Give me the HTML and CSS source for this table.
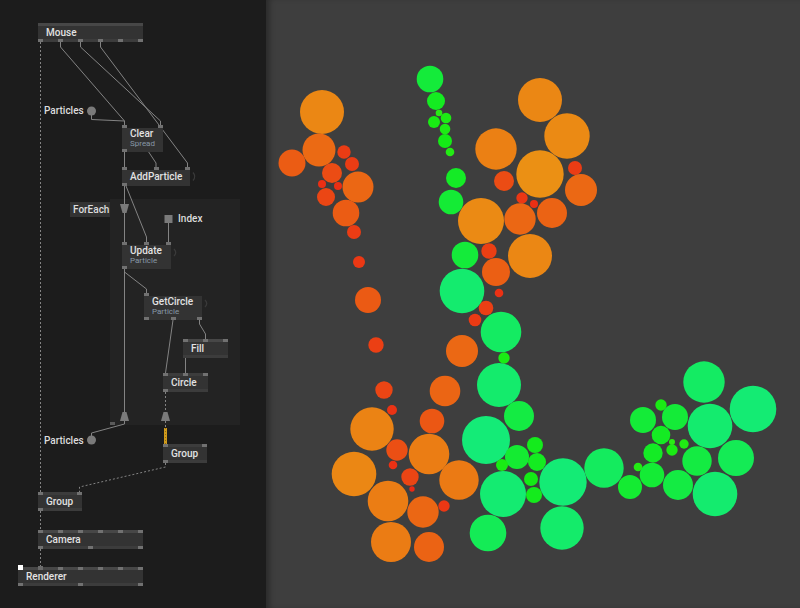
FILE: index.html
```html
<!DOCTYPE html>
<html>
<head>
<meta charset="utf-8">
<title>Particles</title>
<link rel="stylesheet" href="styles.css">
</head>
<body>
<div class="app">
  <div class="editor">
    <div class="region"></div>
    <svg class="wires" viewBox="0 0 266 608" width="266" height="608">
      <g fill="none" stroke="#838383" stroke-width="1">
        <path d="M60.5 42V47L124.5 121V125"/>
        <path d="M80.5 42V47L160.5 121V125"/>
        <path d="M100.5 42V47L187.5 163V167"/>
        <path d="M91.5 115V119.5L124.5 121V125"/>
        <path d="M124.5 152V167"/>
        <path d="M148 151L156 163V167"/>
        <path d="M124.5 186V412"/>
        <path d="M126 186L146.5 237V242"/>
        <path d="M168.5 223V242"/>
        <path d="M124.5 272L146.5 289V293"/>
        <path d="M199.5 320V324L205.5 334V339"/>
        <path d="M173 320L165.5 373"/>
        <path d="M185.5 357V373"/>
        <path d="M124.5 421V424L91.5 433V436"/>
      </g>
      <g fill="none" stroke="#838383" stroke-width="1" stroke-dasharray="2 2">
        <path d="M40.5 42V492M40.5 511V530M40.5 549V567"/>
        <path d="M165.5 392V412"/>
        <path d="M165.5 421V428"/>
        <path d="M165.5 463V467L79.5 487V492"/>
      </g>
      <path d="M165.5 428V444" stroke="#d09b1c" stroke-width="3"/>
      <path d="M165.5 428V444" stroke="#8f6a10" stroke-width="1" stroke-dasharray="1 2"/>
      <g fill="#7a7a7a">
        <circle cx="91.5" cy="111" r="4.5"/>
        <circle cx="91.5" cy="440" r="4.5"/>
        <rect x="164.5" y="215" width="8" height="8"/>
        <polygon points="120,204 129,204 126.5,213 122.5,213"/>
        <polygon points="122.5,412 126.5,412 129,421 120,421"/>
        <polygon points="163.5,412 167.5,412 170,421 161,421"/>
      </g>
      <rect x="110" y="422" width="5" height="3" fill="#5a5a5a"/>
      <g fill="none" stroke="#3a3a3a" stroke-width="1.2">
        <path d="M193 172.5Q196.5 176.5 193 180.5"/>
        <path d="M174 249Q177.5 252.5 174 256"/>
        <path d="M205 300Q208.5 303.5 205 307"/>
      </g>
    </svg>

    <span class="label lb-particles1">Particles</span>
    <span class="label lb-particles2">Particles</span>
    <span class="label lb-index">Index</span>
    <span class="foreach">ForEach</span>

    <div class="node n-mouse">
      <div class="strip lit"></div>
      <div class="body"><span class="title">Mouse</span></div>
      <div class="strip mid"><i></i><i></i><i></i><i></i><i></i><i></i></div>
    </div>

    <div class="node n-clear">
      <div class="strip"><i></i><i></i></div>
      <div class="body two"><span class="title">Clear</span><span class="sub">Spread</span></div>
      <div class="strip flat start"><i></i></div>
    </div>

    <div class="node n-add">
      <div class="strip"><i></i><i></i><i></i></div>
      <div class="body"><span class="title">AddParticle</span></div>
      <div class="strip flat start"><i></i></div>
    </div>

    <div class="node n-update">
      <div class="strip"><i></i><i></i><i></i></div>
      <div class="body two"><span class="title">Update</span><span class="sub">Particle</span></div>
      <div class="strip flat start"><i></i></div>
    </div>

    <div class="node n-getcircle">
      <div class="strip start"><i></i></div>
      <div class="body two"><span class="title">GetCircle</span><span class="sub">Particle</span></div>
      <div class="strip flat"><i></i><i></i><i></i></div>
    </div>

    <div class="node n-fill">
      <div class="strip lit"><i></i><i></i><i></i></div>
      <div class="body"><span class="title">Fill</span></div>
      <div class="strip mid"></div>
    </div>

    <div class="node n-circle">
      <div class="strip mid"><i></i><i></i><i></i></div>
      <div class="body"><span class="title">Circle</span></div>
      <div class="strip mid start"><i></i></div>
    </div>

    <div class="node n-group-r">
      <div class="strip mid"><i></i><i></i></div>
      <div class="body"><span class="title">Group</span></div>
      <div class="strip mid start"><i></i></div>
    </div>

    <div class="node n-group-l">
      <div class="strip mid"><i></i><i></i></div>
      <div class="body"><span class="title">Group</span></div>
      <div class="strip mid start"><i></i></div>
    </div>

    <div class="node n-camera">
      <div class="strip lit"><i></i><i></i><i></i><i></i><i></i><i></i></div>
      <div class="body"><span class="title">Camera</span></div>
      <div class="strip mid"><i></i><i></i><i></i></div>
    </div>

    <div class="node n-renderer">
      <div class="strip lit"><i class="pin-white"></i><i class="pin-tall"></i><i></i><i></i><i></i><i></i><i></i></div>
      <div class="body"><span class="title">Renderer</span></div>
      <div class="strip mid"><i></i><i></i><i></i></div>
    </div>
  </div>

  <div class="view">
    <svg class="scene" viewBox="266 0 534 608" width="534" height="608">
      <g>
        <circle cx="322" cy="112" r="22" fill="hsl(32,84%,50%)"/>
        <circle cx="319" cy="150" r="16.5" fill="hsl(24,84%,50%)"/>
        <circle cx="292" cy="163" r="13.5" fill="hsl(20,84%,50%)"/>
        <circle cx="344" cy="152" r="6.7" fill="hsl(11,84%,50%)"/>
        <circle cx="352" cy="164" r="7" fill="hsl(11,84%,50%)"/>
        <circle cx="332" cy="173" r="10" fill="hsl(15.5,84%,50%)"/>
        <circle cx="358" cy="187" r="15.5" fill="hsl(23,84%,50%)"/>
        <circle cx="322" cy="184" r="4" fill="hsl(7.4,84%,50%)"/>
        <circle cx="338" cy="186" r="4" fill="hsl(7.4,84%,50%)"/>
        <circle cx="326" cy="197" r="9" fill="hsl(14,84%,50%)"/>
        <circle cx="346" cy="213" r="13.3" fill="hsl(20,84%,50%)"/>
        <circle cx="354" cy="232" r="7" fill="hsl(11,84%,50%)"/>
        <circle cx="540" cy="100" r="22" fill="hsl(32,84%,50%)"/>
        <circle cx="567" cy="136" r="22.7" fill="hsl(33,84%,50%)"/>
        <circle cx="496" cy="149" r="20.7" fill="hsl(30,84%,50%)"/>
        <circle cx="540" cy="174" r="23.7" fill="hsl(34.5,84%,50%)"/>
        <circle cx="575" cy="168" r="7" fill="hsl(11,84%,50%)"/>
        <circle cx="504" cy="181" r="10" fill="hsl(15.5,84%,50%)"/>
        <circle cx="581" cy="190" r="16" fill="hsl(23.5,84%,50%)"/>
        <circle cx="522" cy="198" r="5.7" fill="hsl(9.6,84%,50%)"/>
        <circle cx="534" cy="204" r="4" fill="hsl(7.4,84%,50%)"/>
        <circle cx="481" cy="221" r="23" fill="hsl(33,84%,50%)"/>
        <circle cx="520" cy="219" r="15.7" fill="hsl(23,84%,50%)"/>
        <circle cx="552" cy="213" r="15" fill="hsl(22,84%,50%)"/>
        <circle cx="530" cy="256" r="22" fill="hsl(32,84%,50%)"/>
        <circle cx="489" cy="251" r="7.7" fill="hsl(12,84%,50%)"/>
        <circle cx="496" cy="272" r="14" fill="hsl(21,84%,50%)"/>
        <circle cx="499" cy="293" r="4.3" fill="hsl(8,84%,50%)"/>
        <circle cx="486" cy="308" r="7.3" fill="hsl(12,84%,50%)"/>
        <circle cx="475" cy="320" r="6.3" fill="hsl(10.5,84%,50%)"/>
        <circle cx="359" cy="262" r="6" fill="hsl(10,84%,50%)"/>
        <circle cx="368" cy="300" r="13" fill="hsl(19.5,84%,50%)"/>
        <circle cx="376" cy="345" r="7.7" fill="hsl(12,84%,50%)"/>
        <circle cx="384" cy="390" r="8.7" fill="hsl(13.7,84%,50%)"/>
        <circle cx="392" cy="410" r="5" fill="hsl(8.7,84%,50%)"/>
        <circle cx="462" cy="351" r="16" fill="hsl(23.5,84%,50%)"/>
        <circle cx="445" cy="391" r="15.3" fill="hsl(22.6,84%,50%)"/>
        <circle cx="432" cy="421" r="12.3" fill="hsl(18.6,84%,50%)"/>
        <circle cx="372" cy="429" r="21.7" fill="hsl(31,84%,50%)"/>
        <circle cx="397" cy="450" r="10.7" fill="hsl(16.4,84%,50%)"/>
        <circle cx="429" cy="454" r="20.3" fill="hsl(29.4,84%,50%)"/>
        <circle cx="354" cy="474" r="22.3" fill="hsl(32,84%,50%)"/>
        <circle cx="393" cy="465" r="4.3" fill="hsl(8,84%,50%)"/>
        <circle cx="410" cy="477" r="8.7" fill="hsl(13.7,84%,50%)"/>
        <circle cx="412" cy="489" r="2.7" fill="hsl(5.6,84%,50%)"/>
        <circle cx="459" cy="480" r="19.7" fill="hsl(28.5,84%,50%)"/>
        <circle cx="388" cy="501" r="20.3" fill="hsl(29.4,84%,50%)"/>
        <circle cx="444" cy="506" r="5.7" fill="hsl(9.6,84%,50%)"/>
        <circle cx="423" cy="512" r="15.7" fill="hsl(23,84%,50%)"/>
        <circle cx="391" cy="542" r="20" fill="hsl(29,84%,50%)"/>
        <circle cx="429" cy="547" r="15" fill="hsl(22,84%,50%)"/>
      </g>
      <g>
        <circle cx="430" cy="79" r="13.3" fill="hsl(130.5,84%,50%)"/>
        <circle cx="436" cy="101" r="9" fill="hsl(123.6,84%,50%)"/>
        <circle cx="439" cy="113" r="3.3" fill="hsl(114.5,84%,50%)"/>
        <circle cx="446" cy="118" r="5.3" fill="hsl(117.7,84%,50%)"/>
        <circle cx="434" cy="122" r="6" fill="hsl(118.8,84%,50%)"/>
        <circle cx="445" cy="129" r="5.3" fill="hsl(117.7,84%,50%)"/>
        <circle cx="445" cy="141" r="7" fill="hsl(120.4,84%,50%)"/>
        <circle cx="450" cy="152" r="4.3" fill="hsl(116,84%,50%)"/>
        <circle cx="456" cy="178" r="10" fill="hsl(125,84%,50%)"/>
        <circle cx="451" cy="202" r="12.3" fill="hsl(129,84%,50%)"/>
        <circle cx="465" cy="255" r="13.3" fill="hsl(130.5,84%,50%)"/>
        <circle cx="462" cy="291" r="22.3" fill="hsl(145,84%,50%)"/>
        <circle cx="501" cy="332" r="20.3" fill="hsl(141.7,84%,50%)"/>
        <circle cx="504" cy="358" r="5.7" fill="hsl(118.3,84%,50%)"/>
        <circle cx="499" cy="385" r="22" fill="hsl(144.4,84%,50%)"/>
        <circle cx="519" cy="416" r="15" fill="hsl(133,84%,50%)"/>
        <circle cx="486" cy="440" r="24" fill="hsl(147.6,84%,50%)"/>
        <circle cx="503" cy="494" r="23" fill="hsl(146,84%,50%)"/>
        <circle cx="488" cy="533" r="18.3" fill="hsl(138.5,84%,50%)"/>
        <circle cx="535" cy="445" r="8" fill="hsl(122,84%,50%)"/>
        <circle cx="517" cy="457" r="12" fill="hsl(128.4,84%,50%)"/>
        <circle cx="502" cy="465" r="6" fill="hsl(118.8,84%,50%)"/>
        <circle cx="537" cy="462" r="9" fill="hsl(123.6,84%,50%)"/>
        <circle cx="531" cy="479" r="7" fill="hsl(120.4,84%,50%)"/>
        <circle cx="534" cy="495" r="8" fill="hsl(122,84%,50%)"/>
        <circle cx="563" cy="482" r="23.7" fill="hsl(147,84%,50%)"/>
        <circle cx="562" cy="528" r="21.7" fill="hsl(144,84%,50%)"/>
        <circle cx="604" cy="468" r="19.7" fill="hsl(140.7,84%,50%)"/>
        <circle cx="630" cy="487" r="12" fill="hsl(128.4,84%,50%)"/>
        <circle cx="638" cy="467" r="4.3" fill="hsl(116,84%,50%)"/>
        <circle cx="643" cy="420" r="13" fill="hsl(130,84%,50%)"/>
        <circle cx="704" cy="382" r="20.7" fill="hsl(142,84%,50%)"/>
        <circle cx="753" cy="409" r="23.3" fill="hsl(146.5,84%,50%)"/>
        <circle cx="710" cy="426" r="22.3" fill="hsl(145,84%,50%)"/>
        <circle cx="661" cy="405" r="5.7" fill="hsl(118.3,84%,50%)"/>
        <circle cx="675" cy="417" r="13" fill="hsl(130,84%,50%)"/>
        <circle cx="661" cy="435" r="9.3" fill="hsl(124,84%,50%)"/>
        <circle cx="672" cy="442" r="3" fill="hsl(114,84%,50%)"/>
        <circle cx="684" cy="444" r="4.7" fill="hsl(116.7,84%,50%)"/>
        <circle cx="672" cy="450" r="5.7" fill="hsl(118.3,84%,50%)"/>
        <circle cx="653" cy="453" r="9.7" fill="hsl(124.7,84%,50%)"/>
        <circle cx="697" cy="461" r="14.7" fill="hsl(132.7,84%,50%)"/>
        <circle cx="736" cy="458" r="18" fill="hsl(138,84%,50%)"/>
        <circle cx="652" cy="475" r="12.3" fill="hsl(129,84%,50%)"/>
        <circle cx="678" cy="485" r="15" fill="hsl(133,84%,50%)"/>
        <circle cx="715" cy="494" r="22.3" fill="hsl(145,84%,50%)"/>
      </g>
    </svg>
  </div>
</div>
</body>
</html>
```

FILE: styles.css
```css
* { box-sizing: border-box; }

html, body {
  margin: 0;
  padding: 0;
  background: #1c1c1c;
}

body {
  font-family: Roboto, "Liberation Sans", sans-serif;
}

.app {
  display: flex;
  width: 800px;
  height: 608px;
  overflow: hidden;
}

/* node editor */
.editor {
  position: relative;
  flex: 0 0 266px;
  background: #1c1c1c;
}

.region {
  position: absolute;
  left: 110px;
  top: 199px;
  width: 130px;
  height: 226px;
  background: #232323;
}

.wires {
  position: absolute;
  left: 0;
  top: 0;
  display: block;
}

.label {
  position: absolute;
  font-size: 10px;
  font-weight: 500;
  line-height: 12px;
  color: #dcdcdc;
  white-space: nowrap;
}

.lb-particles1 { left: 44px; top: 105px; }
.lb-particles2 { left: 44px; top: 435px; }
.lb-index { left: 178px; top: 213px; }

.foreach {
  position: absolute;
  left: 70px;
  top: 202px;
  width: 40px;
  height: 15px;
  padding-left: 3px;
  background: #333333;
  font-size: 10px;
  font-weight: 500;
  line-height: 15px;
  color: #dcdcdc;
  white-space: nowrap;
}

.node {
  position: absolute;
  display: flex;
  flex-direction: column;
}

.strip {
  height: 3px;
  display: flex;
  justify-content: space-between;
  align-items: flex-start;
}

.strip.lit { background: #474747; }
.strip.mid { background: #3c3c3c; }
.strip.flat { background: #333333; }
.strip.start { justify-content: flex-start; }

.strip i {
  display: block;
  flex: none;
  width: 5px;
  height: 3px;
  background: #717171;
}

.strip i.pin-white {
  height: 5px;
  margin-top: -2px;
  background: #ffffff;
}

.strip i.pin-tall {
  height: 4px;
  margin-top: -1px;
  background: #6a6a6a;
}

.body {
  height: 13px;
  padding: 0 8px;
  background: #333333;
}

.body.two { height: 21px; }

.title {
  display: block;
  font-size: 10px;
  font-weight: 500;
  line-height: 13px;
  color: #e2e2e2;
  white-space: nowrap;
}

.body.two .title { line-height: 11px; }

.sub {
  display: block;
  font-size: 8px;
  line-height: 9px;
  color: #8797a6;
  white-space: nowrap;
}

.n-mouse     { left: 38px;  top: 23px;  width: 105px; }
.n-clear     { left: 122px; top: 125px; width: 41px; }
.n-add       { left: 122px; top: 167px; width: 68px; }
.n-update    { left: 122px; top: 242px; width: 49px; }
.n-getcircle { left: 144px; top: 293px; width: 58px; }
.n-fill      { left: 183px; top: 339px; width: 45px; }
.n-circle    { left: 163px; top: 373px; width: 45px; }
.n-group-r   { left: 163px; top: 444px; width: 44px; }
.n-group-l   { left: 38px;  top: 492px; width: 44px; }
.n-camera    { left: 38px;  top: 530px; width: 105px; }
.n-renderer  { left: 18px;  top: 567px; width: 125px; }

/* render view */
.view {
  position: relative;
  flex: 1;
  background: #3e3e3e;
  box-shadow: inset 6px 0 6px -3px rgba(0, 0, 0, 0.35);
}

.scene {
  display: block;
  width: 534px;
  height: 608px;
}
```
